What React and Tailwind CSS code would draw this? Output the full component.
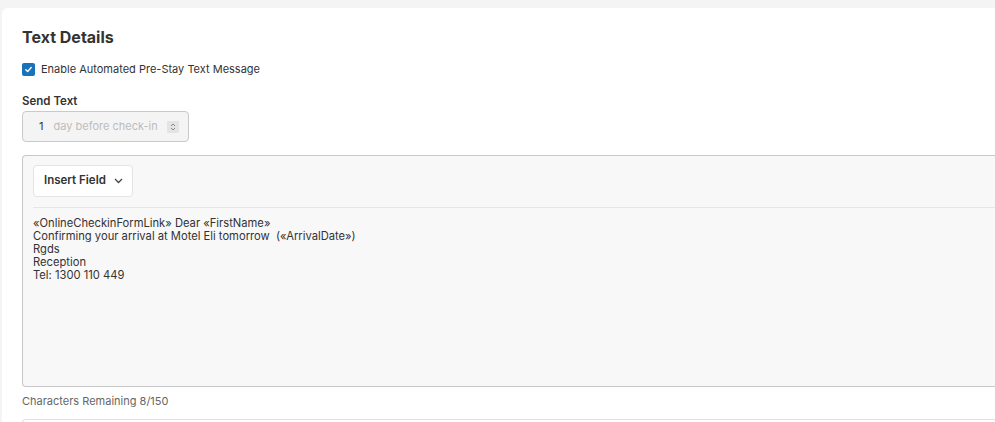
export default function App() {
  return (
    <div className="w-[995px] h-[422px] overflow-hidden bg-[#f4f4f4] pt-[8px] pl-[2px]" style={{ fontFamily: "Inter, 'Liberation Sans', sans-serif" }}>
      <div className="bg-white rounded-tl-[6px] h-[500px] pl-[20px] pt-[19px] text-[#333]">
        <h2 className="text-[16px] font-bold leading-[20px] text-[#333]">Text Details</h2>
        <label className="flex items-center mt-[15px] h-[14px]">
          <span className="w-[13px] h-[13px] rounded-[2px] bg-[#1a73ba] flex items-center justify-center">
            <svg width="9" height="9" viewBox="0 0 10 10"><path d="M2 5.2 L4.1 7.2 L8 2.8" fill="none" stroke="white" strokeWidth="1.6" strokeLinecap="round" strokeLinejoin="round" /></svg>
          </span>
          <span className="ml-[6px] text-[11px] leading-[14px]">Enable Automated Pre-Stay Text Message</span>
        </label>
        <div className="mt-[18px] text-[11.5px] font-semibold leading-[14px]">Send Text</div>
        <div className="mt-[3px] w-[167px] h-[31px] border border-[#c9c9c9] rounded-[4px] bg-[#f4f4f4] flex items-center pl-[16px] text-[11px]">
          <span className="text-[#333]">1</span>
          <span className="ml-[10px] text-[#bdbdbd]">day before check-in</span>
          <span className="ml-[9px] w-[12px] h-[12px] bg-[#e4e4e4] rounded-[1px] flex items-center justify-center">
            <svg width="8" height="10" viewBox="0 0 8 10"><path d="M2 4 L4 2 L6 4 M2 6 L4 8 L6 6" fill="none" stroke="#888" strokeWidth="1" /></svg>
          </span>
        </div>
        <div className="mt-[13px] border border-[#c8c8c8] border-r-0 rounded-tl-[4px] rounded-bl-[4px] bg-[#f8f8f8] h-[232px] pl-[10px] pt-[9px]">
          <button className="h-[32px] w-[100px] bg-white border border-[#e4e4e4] rounded-[4px] flex items-center pl-[10px] text-[11.5px] font-semibold text-[#333]">
            Insert Field
            <svg className="ml-[8px]" width="9" height="6" viewBox="0 0 9 6"><path d="M1 1 L4.5 4.5 L8 1" fill="none" stroke="#444" strokeWidth="1.3" /></svg>
          </button>
          <div className="mt-[10px] border-t border-[#e6e6e6]"></div>
          <div className="pt-[9px] text-[11.2px] leading-[13px] text-[#333]">
            <div>«OnlineCheckinFormLink» Dear «FirstName»</div>
            <div>Confirming your arrival at Motel Eli tomorrow&nbsp; («ArrivalDate»)</div>
            <div>Rgds</div>
            <div>Reception</div>
            <div>Tel: 1300 110 449</div>
          </div>
        </div>
        <div className="mt-[7px] text-[11px] leading-[14px] text-[#666]">Characters Remaining 8/150</div>
        <div className="mt-[11px] h-[40px] border border-[#e0e0e0] border-r-0 rounded-tl-[4px]"></div>
      </div>
    </div>
  );
}
